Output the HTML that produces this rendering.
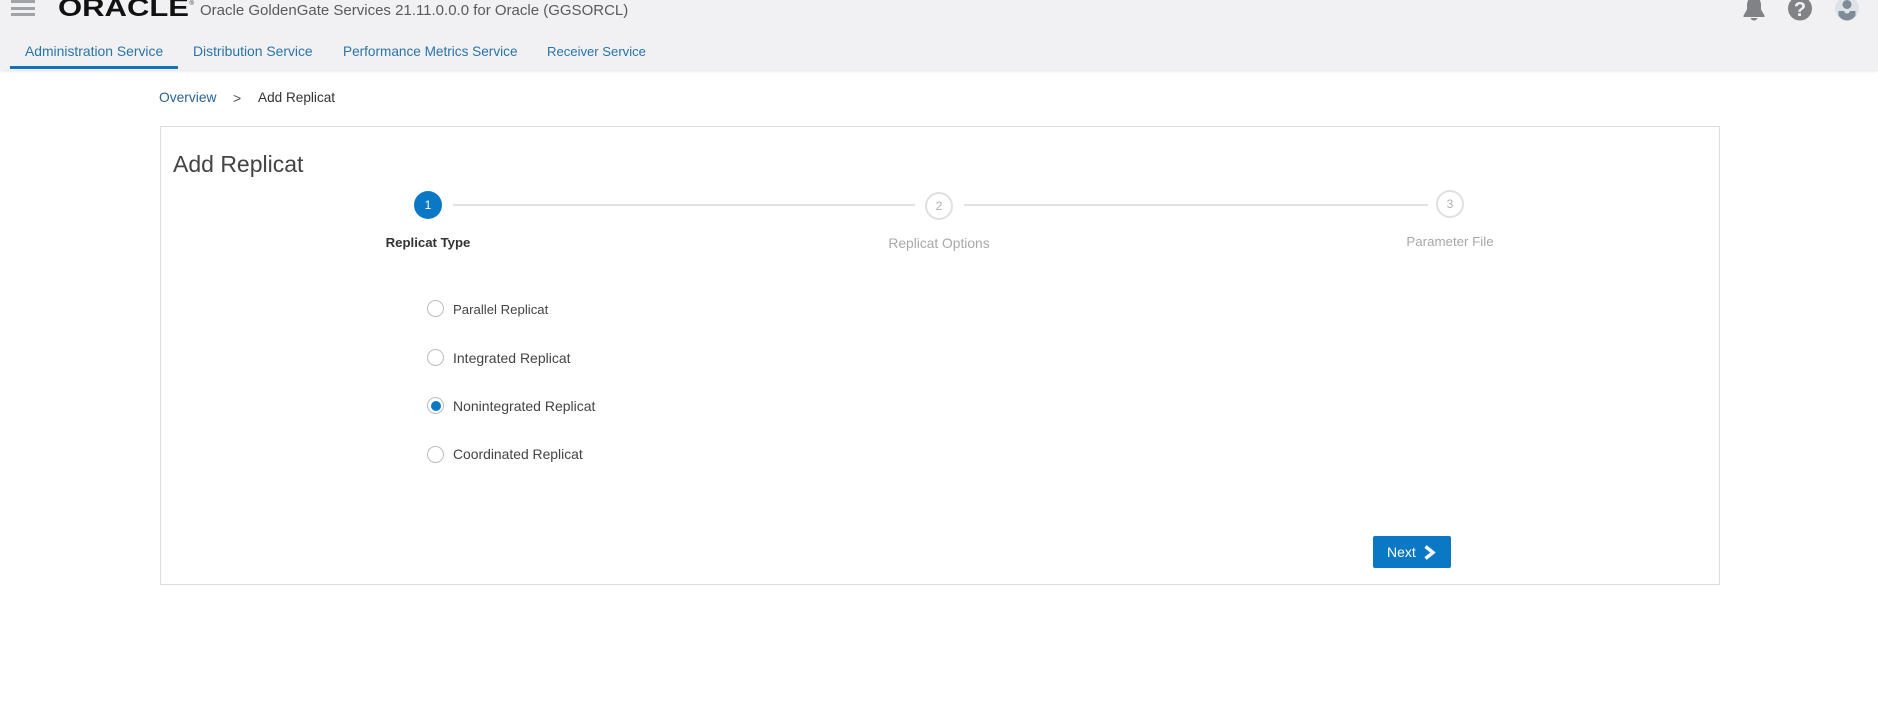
<!DOCTYPE html>
<html lang="en">
<head>
<meta charset="utf-8">
<title>Add Replicat</title>
<style>
html,body{margin:0;padding:0;background:#fff;}
body{position:relative;width:1878px;height:723px;overflow:hidden;font-family:"Liberation Sans",Arial,sans-serif;color:#333;}
.a{position:absolute;white-space:nowrap;line-height:1;}
header{position:absolute;left:0;top:0;width:1878px;height:70px;background:#f1f1f4;box-shadow:0 1px 3px rgba(0,0,0,.12);}
.tab{font-size:14px;color:#2a74a6;top:44px;}
.bar{position:absolute;left:11px;width:24px;height:3px;background:#a2a3a7;}
.card{position:absolute;left:160px;top:126px;width:1558px;height:457px;border:1px solid #dedede;background:#fff;}
.line{position:absolute;height:2px;background:#e2e2e2;}
.c{position:absolute;box-sizing:border-box;border-radius:50%;text-align:center;}
.num{border:2px solid #e0e0e0;background:#fff;color:#b0b0b0;font-size:12px;width:28px;height:28px;line-height:25px;}
.lab{font-size:13.8px;transform:translateX(-50%);color:#a8a8a8;}
.r{width:17px;height:17px;left:427px;border:1px solid #bcbcbc;background:#fff;}
.rl{left:453px;font-size:14px;color:#444;}
</style>
</head>
<body>
<header>
  <div class="bar" style="top:0"></div>
  <div class="bar" style="top:7px"></div>
  <div class="bar" style="top:13px"></div>
  <svg class="a" style="left:56px;top:0" width="146" height="20">
    <text x="2" y="16" font-family="Liberation Sans,sans-serif" font-size="25" font-weight="700" fill="#111" textLength="131" lengthAdjust="spacingAndGlyphs">ORACLE</text>
    <text x="133.500" y="5" font-family="Liberation Sans,sans-serif" font-size="6" fill="#333">®</text>
  </svg>
  <div class="a" style="left:200px;top:3px;font-size:15px;color:#5a5a5a;">Oracle GoldenGate Services 21.11.0.0.0 for Oracle (GGSORCL)</div>

  <svg class="a" style="left:1742px;top:0" width="24" height="22" viewBox="0 0 24 22">
    <path d="M12 -3c-4.500 0-7 3.500-7 8v4.500L1.500 15.500v1.500h21v-1.500L19 9.500V5c0-4.500-2.500-8-7-8zM8.500 18h7c-.5 1.500-2 2.500-3.500 2.500S9 19.500 8.500 18z" fill="#808285"/>
  </svg>
  <svg class="a" style="left:1788px;top:0" width="24" height="22" viewBox="0 0 24 22">
    <circle cx="12" cy="8.500" r="12" fill="#808285"/>
    <text x="12" y="16" text-anchor="middle" font-family="Liberation Sans,sans-serif" font-size="20" font-weight="700" fill="#f1f1f4">?</text>
  </svg>
  <svg class="a" style="left:1835px;top:0" width="24" height="22" viewBox="0 0 24 22">
    <circle cx="12" cy="8.500" r="12" fill="#dfe3e8"/>
    <circle cx="12" cy="4.500" r="4.500" fill="#7f8b98"/>
    <path d="M3.500 11h5.500c.5 1.500 1.500 2.500 3 2.500s2.500-1 3-2.500h5.500v4.500c-2 3-5 5-8.500 5s-6.500-2-8.500-5z" fill="#7f8b98"/>
  </svg>

  <nav>
    <div class="a tab" style="left:25px;top:45px;font-size:13.9px">Administration Service</div>
    <div class="a tab" style="left:193px;top:45px;font-size:13.9px">Distribution Service</div>
    <div class="a tab" style="left:343px;top:45px;font-size:13.600px">Performance Metrics Service</div>
    <div class="a tab" style="left:547px;top:45px;font-size:13.100px">Receiver Service</div>
  </nav>
  <div style="position:absolute;left:10px;top:66px;width:168px;height:3px;background:#0f75bc;"></div>
</header>

<div class="a" style="left:159px;top:91px;font-size:13.800px;color:#2a6496;">Overview</div>
<div class="a" style="left:233px;top:91px;font-size:14px;color:#555;">&gt;</div>
<div class="a" style="left:258px;top:91px;font-size:13.600px;color:#333;">Add Replicat</div>

<div class="card"></div>
<div class="a" style="left:173px;top:153px;font-size:23px;color:#444;">Add Replicat</div>

<div class="line" style="left:453px;top:204px;width:462px"></div>
<div class="line" style="left:964px;top:204px;width:464px"></div>

<div class="c" style="left:414px;top:191px;width:28px;height:28px;background:#0a78c5;color:#fff;font-size:12px;line-height:29px;">1</div>
<div class="c num" style="left:925px;top:192px;">2</div>
<div class="c num" style="left:1436px;top:190px;">3</div>

<div class="a lab" style="left:428px;top:236px;color:#333;font-weight:700;font-size:13.200px;">Replicat Type</div>
<div class="a lab" style="left:939px;top:237px;">Replicat Options</div>
<div class="a lab" style="left:1450px;top:235px;font-size:13.300px;">Parameter File</div>

<div class="c r" style="top:300px"></div>
<div class="a rl" style="top:303px;font-size:13.200px">Parallel Replicat</div>
<div class="c r" style="top:349px"></div>
<div class="a rl" style="top:351px">Integrated Replicat</div>
<div class="c r" style="top:397px"></div>
<div class="c" style="left:430.500px;top:400.500px;width:10px;height:10px;background:#0a78c5;"></div>
<div class="a rl" style="top:399px">Nonintegrated Replicat</div>
<div class="c r" style="top:446px"></div>
<div class="a rl" style="top:448px;font-size:13.900px">Coordinated Replicat</div>

<div style="position:absolute;left:1373px;top:536px;width:78px;height:32px;background:#0a78c5;border-radius:2px;"></div>
<div class="a" style="left:1387px;top:545px;font-size:14px;color:#fff;">Next</div>
<svg class="a" style="left:1423px;top:543px" width="14" height="20" viewBox="0 0 14 20">
  <path d="M2.500 3.500l7.500 6-7.500 6" fill="none" stroke="#fff" stroke-width="3.400"/>
</svg>
</body>
</html>
